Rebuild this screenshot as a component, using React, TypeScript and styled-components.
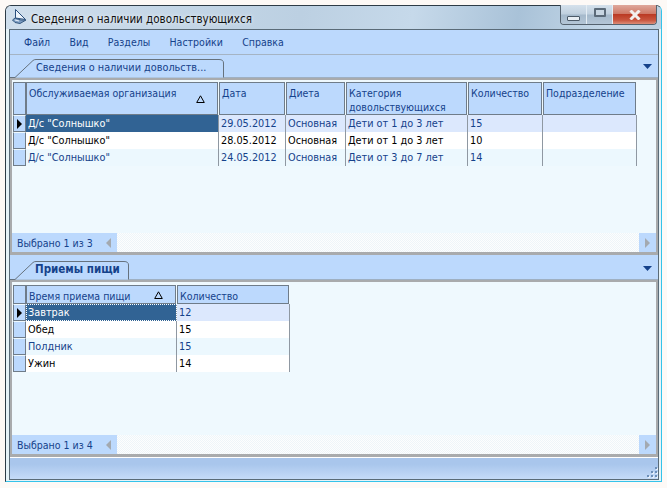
import React from 'react';
import styled, { createGlobalStyle } from 'styled-components';

const textBlue = '#15428b';
const headerBlue = '#bcd9fd';
const panelBlue = '#eff9fe';
const frameGrey = '#a9abad';
const gridGrey = '#8f98a2';

interface Column {
  title: React.ReactNode;
  width: number;
  sorted?: boolean;
}

interface Row {
  cells: string[];
  tone: 'selected' | 'white' | 'alt';
}

const GlobalStyle = createGlobalStyle`
  html, body {
    margin: 0;
    padding: 0;
    background: #fdf9f6;
  }
  body {
    width: 667px;
    height: 488px;
    overflow: hidden;
    font-family: "DejaVu Sans Condensed", "Liberation Sans", Arial, sans-serif;
    font-size: 10.5px;
  }
`;

const Page = styled.div`
  width: 667px;
  height: 488px;
  padding: 5px;
  box-sizing: border-box;
`;

const Window = styled.div`
  height: 477px;
  box-sizing: border-box;
  display: flex;
  flex-direction: column;
  padding: 0 2px 1px 3px;
  border: 1px solid #2d3b46;
  border-bottom-color: #35c3ea;
  border-right-color: #35c3ea;
  border-radius: 6px 6px 0 0;
  background: #e6f3f8;
`;

const TitleBar = styled.div`
  height: 23px;
  flex: none;
  display: flex;
  align-items: flex-start;
  margin: 0 -2px 0 -3px;
  padding: 0 2px 0 3px;
  border-radius: 5px 5px 0 0;
  background: linear-gradient(100deg, #cfdeec 0%, #bcd0e2 45%, #c6d9ea 62%, #a9c2d8 78%, #c5d8e8 92%, #bdd0e0 100%);
`;

const TitleIcon = styled.svg`
  width: 15px;
  height: 15px;
  margin: 3px 4px 0 3px;
  flex: none;
`;

const TitleText = styled.div`
  flex: 1;
  margin-top: 6px;
  font-size: 11.5px;
  color: #101010;
  text-shadow: 0 0 4px rgba(255, 255, 255, 0.9);
`;

const CaptionButtons = styled.div`
  display: flex;
  height: 19px;
  margin-top: -1px;
  margin-right: 2px;
  border: 1px solid #55626e;
  border-top: none;
  border-radius: 0 0 4px 4px;
  overflow: hidden;
`;

const CaptionButton = styled.div<{ $close?: boolean }>`
  width: ${p => (p.$close ? 43 : 26)}px;
  box-sizing: border-box;
  display: flex;
  align-items: center;
  justify-content: center;
  border-right: ${p => (p.$close ? 'none' : '1px solid #e4edf4')};
  background: ${p =>
    p.$close
      ? 'linear-gradient(#dfa89c 0%, #cf7a68 45%, #bb3a24 50%, #c9563f 80%, #dc8d78 100%)'
      : 'linear-gradient(#d5e1ec 0%, #c0d0de 48%, #a5b9cb 52%, #b4c6d6 100%)'};
`;

const MinGlyph = styled.div`
  width: 13px;
  height: 5px;
  margin-top: 7px;
  box-sizing: border-box;
  background: #e8eef3;
  border: 1px solid #4c5a68;
  border-radius: 1px;
`;

const MaxGlyph = styled.div`
  width: 12px;
  height: 9px;
  box-sizing: border-box;
  margin-top: -5px;
  background: #c8d6e2;
  border: 2px solid #5c6b79;
  border-radius: 1px;
`;

const Client = styled.div`
  flex: 1;
  min-height: 0;
  display: flex;
  flex-direction: column;
  border: 1px solid #5a6b78;
  background: ${headerBlue};
`;

const MenuBar = styled.div`
  height: 25px;
  flex: none;
  display: flex;
  align-items: center;
  gap: 19.3px;
  padding-left: 14px;
  border-bottom: 1px solid #a5b4c4;
  box-sizing: border-box;
`;

const MenuItem = styled.span`
  color: ${textBlue};
`;

const Panel = styled.div<{ $gapAbove?: boolean }>`
  display: flex;
  flex-direction: column;
  flex: none;
  height: 200px;
  box-sizing: border-box;
  margin-top: ${p => (p.$gapAbove ? 2 : 0)}px;
  padding: 0 2px;
  background: ${frameGrey};
`;

const TabStrip = styled.div`
  height: 23px;
  flex: none;
  margin: 0 -2px;
  display: flex;
  justify-content: space-between;
  align-items: flex-end;
  background: ${headerBlue};
  border-bottom: 1px solid #9fb0c2;
  box-sizing: border-box;
`;

const Tab = styled.div<{ $width: number; $bold?: boolean }>`
  position: relative;
  width: ${p => p.$width}px;
  height: 19px;
  margin-bottom: -1px;
  box-sizing: border-box;
  padding: 2px 0 0 ${p => (p.$bold ? 25 : 26)}px;
  line-height: 13px;
  color: ${textBlue};
  white-space: nowrap;
`;

const TabOutline = styled.svg`
  position: absolute;
  left: 0;
  top: 0;
  pointer-events: none;
`;

const TabLabel = styled.span<{ $bold?: boolean }>`
  position: relative;
  font-weight: ${p => (p.$bold ? 700 : 400)};
  font-size: ${p => (p.$bold ? 11.5 : 10.8)}px;
`;

const TabMenu = styled.svg`
  width: 9px;
  height: 5px;
  margin: 0 6px 8px 0;
  flex: none;
`;

const Body = styled.div<{ $tall?: boolean }>`
  flex: 1;
  min-height: 0;
  margin-top: 2px;
  padding: ${p => (p.$tall ? 2 : 3)}px 0 0 1px;
  background: ${panelBlue};
  box-sizing: border-box;
`;

const GridRow = styled.div`
  display: flex;
`;

const HeaderIndicator = styled.div`
  width: 13px;
  box-sizing: border-box;
  background: ${headerBlue};
  border: 1px solid #6f7c89;
  flex: none;
`;

const HeaderCell = styled.div<{ $width: number; $tall?: boolean }>`
  position: relative;
  width: ${p => p.$width}px;
  height: ${p => (p.$tall ? 33 : 19)}px;
  margin-right: 1px;
  padding: 3px 2px 0 2px;
  box-sizing: border-box;
  flex: none;
  color: ${textBlue};
  line-height: 14px;
  background: ${headerBlue};
  border: 1px solid #6f7c89;
`;

const SortMark = styled.svg<{ $tall?: boolean }>`
  position: absolute;
  right: 12px;
  top: ${p => (p.$tall ? 12 : 5)}px;
  width: 9px;
  height: 8px;
`;

const RowIndicator = styled.div`
  width: 13px;
  height: 17px;
  box-sizing: border-box;
  display: flex;
  align-items: center;
  justify-content: center;
  background: ${headerBlue};
  border: 1px solid #6f7c89;
  border-top-color: ${panelBlue};
  flex: none;
`;

const Arrow = styled.div`
  width: 0;
  height: 0;
  border-left: 5px solid #000;
  border-top: 5px solid transparent;
  border-bottom: 5px solid transparent;
`;

const Cell = styled.div<{ $width: number; $bg: string; $color: string; $focus?: boolean }>`
  width: ${p => p.$width + 1}px;
  height: 17px;
  line-height: 17px;
  padding-left: 2px;
  box-sizing: border-box;
  flex: none;
  overflow: hidden;
  white-space: nowrap;
  font-size: 10.8px;
  background: ${p => p.$bg};
  color: ${p => p.$color};
  border-right: 1px solid ${gridGrey};
  outline: ${p => (p.$focus ? '1px dotted #fff' : 'none')};
  outline-offset: -1px;
`;

const ScrollRow = styled.div`
  height: 19px;
  flex: none;
  display: flex;
  margin-bottom: 3px;
  background-color: #fbfdfe;
  background-image: repeating-conic-gradient(#eef5f9 0 25%, #fdfefe 0 50%);
  background-size: 2px 2px;
`;

const RecordLabel = styled.div`
  width: 105px;
  display: flex;
  align-items: center;
  justify-content: space-between;
  box-sizing: border-box;
  padding: 0 6px 0 5px;
  background: ${headerBlue};
  color: ${textBlue};
`;

const ScrollTrack = styled.div`
  flex: 1;
`;

const ScrollEnd = styled.div`
  width: 17px;
  display: flex;
  align-items: center;
  justify-content: center;
  background: ${headerBlue};
`;

const ScrollArrow = styled.div<{ $left?: boolean }>`
  width: 0;
  height: 0;
  border-top: 5px solid transparent;
  border-bottom: 5px solid transparent;
  ${p =>
    p.$left
      ? 'border-right: 5px solid #a3a9b0;'
      : 'border-left: 5px solid #a3a9b0;'}
`;

const StatusBar = styled.div`
  flex: 1;
  min-height: 0;
  position: relative;
  border-top: 1px solid #fff;
  background: linear-gradient(#a9c6ec 0%, #a9c6ec 30%, #c5dbf8 100%);
`;

const Grip = styled.svg`
  position: absolute;
  right: 0;
  bottom: 1px;
  width: 12px;
  height: 12px;
`;

const topColumns: Column[] = [
  { title: 'Обслуживаемая организация', width: 192, sorted: true },
  { title: 'Дата', width: 66 },
  { title: 'Диета', width: 59 },
  { title: <>Категория<br />довольствующихся</>, width: 121 },
  { title: 'Количество', width: 74 },
  { title: 'Подразделение', width: 93 }
];

const topRows: Row[] = [
  { cells: ['Д/с "Солнышко"', '29.05.2012', 'Основная', 'Дети от 1 до 3 лет', '15', ''], tone: 'selected' },
  { cells: ['Д/с "Солнышко"', '28.05.2012', 'Основная', 'Дети от 1 до 3 лет', '10', ''], tone: 'white' },
  { cells: ['Д/с "Солнышко"', '24.05.2012', 'Основная', 'Дети от 3 до 7 лет', '14', ''], tone: 'alt' }
];

const bottomColumns: Column[] = [
  { title: 'Время приема пищи', width: 150, sorted: true },
  { title: 'Количество', width: 112 }
];

const bottomRows: Row[] = [
  { cells: ['Завтрак', '12'], tone: 'selected' },
  { cells: ['Обед', '15'], tone: 'white' },
  { cells: ['Полдник', '15'], tone: 'alt' },
  { cells: ['Ужин', '14'], tone: 'white' }
];

const cellColours = (row: Row, index: number) => {
  if (row.tone === 'selected') {
    return index === 0
      ? { bg: '#316394', color: '#fff' }
      : { bg: '#dce8fd', color: textBlue };
  }
  if (row.tone === 'alt') return { bg: '#ecf8fe', color: textBlue };
  return { bg: '#fff', color: '#000' };
};

const DataGrid = ({
  columns,
  rows,
  tall,
  focus
}: {
  columns: Column[];
  rows: Row[];
  tall?: boolean;
  focus?: boolean;
}) => (
  <div>
    <GridRow>
      <HeaderIndicator />
      {columns.map((column, i) => (
        <HeaderCell key={i} $width={column.width} $tall={tall}>
          {column.title}
          {column.sorted && (
            <SortMark viewBox="0 0 9 8" $tall={tall}>
              <path d="M4.5 0.8 L8.3 7.5 H0.7 Z" fill="none" stroke="#000" />
            </SortMark>
          )}
        </HeaderCell>
      ))}
    </GridRow>
    {rows.map((row, r) => (
      <GridRow key={r}>
        <RowIndicator>{row.tone === 'selected' && <Arrow />}</RowIndicator>
        {columns.map((column, c) => {
          const colours = cellColours(row, c);
          return (
            <Cell
              key={c}
              $width={column.width}
              $bg={colours.bg}
              $color={colours.color}
              $focus={focus && row.tone === 'selected' && c === 0}
            >
              {row.cells[c]}
            </Cell>
          );
        })}
      </GridRow>
    ))}
  </div>
);

const TabPanel = ({
  label,
  tabWidth,
  bold,
  columns,
  rows,
  tall,
  focus,
  record,
  gapAbove
}: {
  label: string;
  tabWidth: number;
  bold?: boolean;
  columns: Column[];
  rows: Row[];
  tall?: boolean;
  focus?: boolean;
  record: string;
  gapAbove?: boolean;
}) => (
  <Panel $gapAbove={gapAbove}>
    <TabStrip>
      <Tab $width={tabWidth} $bold={bold}>
        <TabOutline width={tabWidth} height={19} viewBox={`0 0 ${tabWidth} 19`}>
          <path
            d={`M0 18.5 H5 L23 1.5 Q24 0.5 26 0.5 H${tabWidth - 6} Q${tabWidth - 1.5} 0.5 ${tabWidth - 1.5} 4 V18.5`}
            fill={headerBlue}
            stroke="#66727e"
          />
        </TabOutline>
        <TabLabel $bold={bold}>{label}</TabLabel>
      </Tab>
      <TabMenu viewBox="0 0 9 5">
        <path d="M0 0 H9 L4.5 5 Z" fill={textBlue} />
      </TabMenu>
    </TabStrip>
    <Body $tall={tall}>
      <DataGrid columns={columns} rows={rows} tall={tall} focus={focus} />
    </Body>
    <ScrollRow>
      <RecordLabel>
        {record}
        <ScrollArrow $left />
      </RecordLabel>
      <ScrollTrack />
      <ScrollEnd>
        <ScrollArrow />
      </ScrollEnd>
    </ScrollRow>
  </Panel>
);

const App = () => (
  <Page>
    <GlobalStyle />
    <Window>
      <TitleBar>
        <TitleIcon viewBox="0 0 15 15">
          <path d="M3.5 0.5 L13.5 10.5 L3.5 9 Z" fill="#eef5fc" stroke="#2a4f7e" strokeWidth="1" />
          <path d="M0.5 11 L3 9 L9 11 L14 11 L8 14.5 L3 13.5 Z" fill="#7d9dc2" stroke="#35587f" strokeWidth="1" />
          <path d="M3 11 L7 12" stroke="#e8f1fa" strokeWidth="1" />
        </TitleIcon>
        <TitleText>Сведения о наличии довольствующихся</TitleText>
        <CaptionButtons>
          <CaptionButton>
            <MinGlyph />
          </CaptionButton>
          <CaptionButton>
            <MaxGlyph />
          </CaptionButton>
          <CaptionButton $close>
            <svg width="12" height="10" viewBox="0 0 12 10">
              <path d="M1.5 0.5 L10.5 9.5 M10.5 0.5 L1.5 9.5" stroke="#f2f0ee" strokeWidth="3" />
            </svg>
          </CaptionButton>
        </CaptionButtons>
      </TitleBar>
      <Client>
        <MenuBar>
          <MenuItem>Файл</MenuItem>
          <MenuItem>Вид</MenuItem>
          <MenuItem>Разделы</MenuItem>
          <MenuItem>Настройки</MenuItem>
          <MenuItem>Справка</MenuItem>
        </MenuBar>
        <TabPanel
          label="Сведения о наличии довольств..."
          tabWidth={215}
          columns={topColumns}
          rows={topRows}
          tall
          record="Выбрано 1 из 3"
        />
        <TabPanel
          label="Приемы пищи"
          tabWidth={120}
          bold
          columns={bottomColumns}
          rows={bottomRows}
          focus
          record="Выбрано 1 из 4"
          gapAbove
        />
        <StatusBar>
          <Grip viewBox="0 0 12 12">
            <path d="M10 2h2v2h-2z M6 6h2v2H6z M10 6h2v2h-2z M2 10h2v2H2z M6 10h2v2H6z M10 10h2v2h-2z" fill="#e8f0fb" />
            <path d="M9 1h2v2H9z M5 5h2v2H5z M9 5h2v2H9z M1 9h2v2H1z M5 9h2v2H5z M9 9h2v2H9z" fill="#6d8fb8" />
          </Grip>
        </StatusBar>
      </Client>
    </Window>
  </Page>
);

export default App;
